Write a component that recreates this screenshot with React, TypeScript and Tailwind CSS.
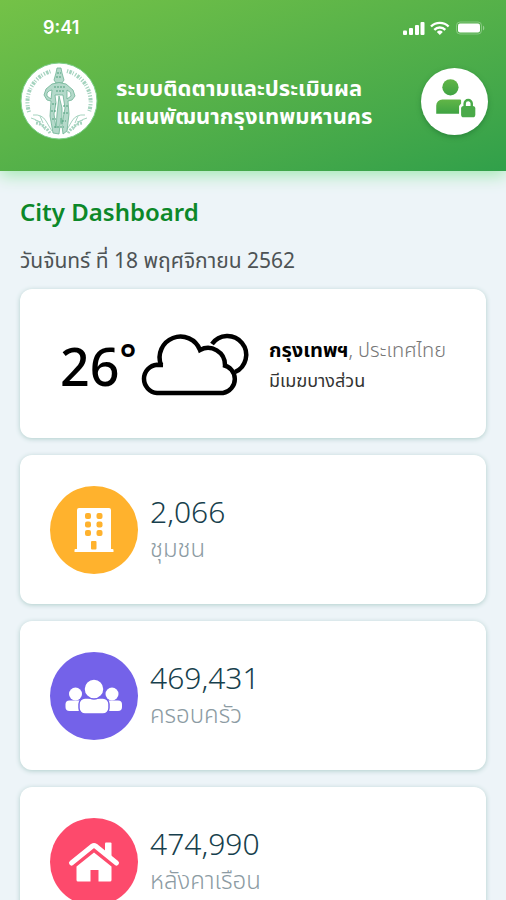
import type { ReactNode } from "react";

type Stat = {
  value: string;
  label: string;
  color: string;
  icon: ReactNode;
};

const BuildingIcon = () => (
  <svg viewBox="0 0 88 88" className="size-full" aria-hidden="true">
    <path
      fill="#fff"
      d="M29 22h30a2 2 0 0 1 2 2v39h1.500a1 1 0 0 1 1 1v2h-39v-2a1 1 0 0 1 1-1H27V24a2 2 0 0 1 2-2Z"
    />
    {[27, 35.5, 44].map((y) => (
      <g key={y} fill="#ffb22d">
        <rect x="35" y={y} width="6" height="6" rx="2" />
        <rect x="46.500" y={y} width="6" height="6" rx="2" />
      </g>
    ))}
    <rect x="41" y="55" width="5.500" height="8.500" rx="1" fill="#ffb22d" />
  </svg>
);

const FamilyIcon = () => (
  <svg viewBox="0 0 88 88" className="size-full" fill="#fff" aria-hidden="true">
    <circle cx="25.500" cy="42" r="6.500" />
    <circle cx="62" cy="42" r="6.500" />
    <rect x="15.500" y="48.500" width="18" height="10.500" rx="4" />
    <rect x="54" y="48.500" width="18" height="10.500" rx="4" />
    <rect x="29" y="46" width="30" height="16" rx="6" stroke="#7462e9" strokeWidth="1.500" />
    <circle cx="44" cy="37" r="10" stroke="#7462e9" strokeWidth="1.500" />
  </svg>
);

const HouseIcon = () => (
  <svg viewBox="0 0 88 88" className="size-full" aria-hidden="true">
    <path fill="#fff" d="M55 25.500a1 1 0 0 1 1-1h4.500a1 1 0 0 1 1 1V39L55 33Z" />
    <path
      d="m21.500 45 21-17a2.500 2.500 0 0 1 3 0l21 17"
      fill="none"
      stroke="#fff"
      strokeWidth="5"
      strokeLinecap="round"
    />
    <path
      fill="#fff"
      d="M44 34.500 61.500 48.500V62a1.500 1.500 0 0 1-1.500 1.500H48.500V52h-8v11.500H28a1.500 1.500 0 0 1-1.500-1.500V48.500Z"
    />
  </svg>
);

const stats: Stat[] = [
  { value: "2,066", label: "ชุมชน", color: "bg-[#ffb22d]", icon: <BuildingIcon /> },
  { value: "469,431", label: "ครอบครัว", color: "bg-[#7462e9]", icon: <FamilyIcon /> },
  { value: "474,990", label: "หลังคาเรือน", color: "bg-[#fd4a6c]", icon: <HouseIcon /> },
];

const StatusBar = () => (
  <div className="flex h-14 items-center justify-between pl-[43px] pr-5 text-white">
    <span className="font-['Inter',sans-serif] text-lg font-semibold">9:41</span>
    <svg viewBox="0 0 84 16" className="h-4 w-[84px]" fill="#fff" aria-hidden="true">
      <rect x="1" y="10.500" width="4" height="4.500" rx="1" />
      <rect x="7" y="8" width="4" height="7" rx="1" />
      <rect x="13" y="5" width="4" height="10" rx="1" />
      <rect x="18.500" y="2" width="4" height="13" rx="1" />
      <g fill="none" stroke="#fff" strokeWidth="2.400">
        <path d="M29 6.500a12.500 12.500 0 0 1 17.600 0" />
        <path d="M32.300 9.800a7.800 7.800 0 0 1 11 0" />
      </g>
      <path d="m37.800 15-3-3a4.300 4.300 0 0 1 6 0Z" />
      <rect x="54.500" y="2" width="25" height="12" rx="3.500" fill="none" stroke="#fff" strokeOpacity=".3" />
      <rect x="56" y="3.500" width="22" height="9" rx="2" />
      <path d="M81 5.500v5a3 3 0 0 0 0-5Z" fillOpacity=".4" />
    </svg>
  </div>
);

const Emblem = () => (
  <svg viewBox="0 0 78 78" className="size-[78px] shrink-0" role="img" aria-label="กรุงเทพมหานคร">
    <circle cx="39" cy="39" r="38" fill="#fff" stroke="#7fcf8c" />
    <g fill="none" stroke="#a5d3bf">
      <path d="M9 50A32 32 0 0 1 32 9" strokeWidth="4" strokeDasharray="1.200 1.300 2.500 1 1 1.800" />
      <path d="M47 9A32 32 0 0 1 69 50" strokeWidth="4" strokeDasharray="1.200 1.300 2.500 1 1 1.800" />
      <path d="M13 53q9-1 13 6t6 10M65 53q-9-1-13 6t-6 10M11 56q9 2 14 12M67 56q-9 2-14 12" />
      <path d="M16 61q8 1 14 10M62 61q-8 1-14 10" strokeWidth="3" strokeDasharray="2 1.200" />
      <path d="M20 54l3 7M58 54l-3 7M15 58l6 2M63 58l-6 2" />
    </g>
    <g fill="#b4d9ca" stroke="#6db394" strokeWidth=".8" strokeLinejoin="round">
      <path d="M37 6h4l1 5 2 7-2 3h-6l-2-3 2-7Z" />
      <path d="M32 22q7-3 14 0l7 6 2 6-3 4-4 1 1 13-2 17-4 3-2-16-2 16-6-1-3-17 1-15-4-1-3-5 2-6Z" />
      <path fill="#fff" d="M32 28q-6 1-5 6l4 3ZM47 28q5 2 4 6l-4 3Z" />
      <path fill="#fff" d="m35 33 1 8-2 11 2 14 1-14 2-18 3 12v16l3-16-2-13Z" />
    </g>
    <path
      d="M32 42h4M43 44h5M31 49h5M43 51h5M32 57h4M42 59h4M34 65h10M34 25h11M36 29h8M37 11h4M36 15h6"
      stroke="#4f9f7c"
      strokeDasharray="2 1"
    />
  </svg>
);

const ProfileIcon = () => (
  <svg viewBox="0 0 66 66" className="size-full" aria-hidden="true">
    <defs>
      <linearGradient id="person" x1="0" y1="0" x2="0" y2="1">
        <stop stopColor="#62b647" />
        <stop offset="1" stopColor="#3fa343" />
      </linearGradient>
    </defs>
    <circle cx="29" cy="19" r="8" fill="url(#person)" />
    <path fill="url(#person)" d="M15 45V37a6 6 0 0 1 6-6h17.500a1 1 0 0 1 1 1v3l-2 2.500V45Z" />
    <rect x="39.500" y="37.500" width="14" height="11" rx="2.500" fill="#4aaa49" />
    <path d="M43 38v-3a3.500 3.500 0 0 1 7 0v3" fill="none" stroke="#4aaa49" strokeWidth="2.400" />
  </svg>
);

const Header = () => (
  <header className="bg-linear-to-br from-[#74c247] to-[#30a04a] pb-[31px] shadow-[0_4px_16px_#a0e8b0]">
    <StatusBar />
    <div className="flex items-center justify-between gap-[18px] pl-5 pr-[18px] pt-1.5">
      <Emblem />
      <h1 className="flex-1 whitespace-nowrap text-[22px]/7 font-bold text-white">
        ระบบติดตามและประเมินผล
        <br />
        แผนพัฒนากรุงเทพมหานคร
      </h1>
      <button
        type="button"
        aria-label="บัญชีผู้ใช้"
        className="size-[67px] shrink-0 rounded-full bg-white shadow-[0_2px_5px_#1e6f2f90]"
      >
        <ProfileIcon />
      </button>
    </div>
  </header>
);

const WeatherCard = () => (
  <section className="flex min-h-[149px] items-center rounded-xl bg-white pl-10 pr-4 shadow-[0_1px_5px_#b0cecb]">
    <p className="flex w-20 shrink-0 items-start">
      <span className="pt-1 text-[52px]/16 font-medium">26</span>
      <span className="text-[40px]/14 font-semibold">°</span>
    </p>
    <svg
      viewBox="0 0 112 66"
      className="h-[66px] w-28 shrink-0"
      fill="none"
      stroke="#000"
      strokeWidth="4.500"
      aria-hidden="true"
    >
      <path d="M72 13A18.800 18.800 0 1 1 95 41" />
      <path d="M17 62A14.200 14.200 0 0 1 17 33.700L23 34H21A20.800 20.800 0 0 1 60 19A17 17 0 0 1 85 34H83A14.200 14.200 0 0 1 83 62Z" />
    </svg>
    <div className="ml-[17px] flex flex-col">
      <p className="text-xl/8 font-light text-[#777]">
        <strong className="font-bold text-black">กรุงเทพฯ</strong>, ประเทศไทย
      </p>
      <p className="text-lg/7 text-[#333]">มีเมฆบางส่วน</p>
    </div>
  </section>
);

const StatCard = ({ value, label, color, icon }: Stat) => (
  <section className="flex min-h-[149px] items-center gap-3 rounded-xl bg-white px-[30px] shadow-[0_1px_5px_#b0cecb]">
    <div className={`size-[88px] shrink-0 rounded-full ${color}`}>{icon}</div>
    <div>
      <p className="text-3xl/9 font-light text-[#173f4d]">{value}</p>
      <h3 className="text-2xl/9 font-light text-[#8c9ba3]">{label}</h3>
    </div>
  </section>
);

export default function App() {
  return (
    <div className="min-h-screen overflow-hidden bg-[#edf4f8] font-['Noto_Sans','Noto_Sans_Thai',sans-serif]">
      <Header />
      <main className="px-5 pb-5 pt-[25px]">
        <h2 className="text-2xl/8 font-semibold text-[#0c8829]">City Dashboard</h2>
        <p className="mb-[13px] mt-4 text-[21px]/8 text-[#4d5355]">วันจันทร์ ที่ 18 พฤศจิกายน 2562</p>
        <div className="flex flex-col gap-[17px]">
          <WeatherCard />
          {stats.map((stat) => (
            <StatCard key={stat.label} {...stat} />
          ))}
        </div>
      </main>
    </div>
  );
}
